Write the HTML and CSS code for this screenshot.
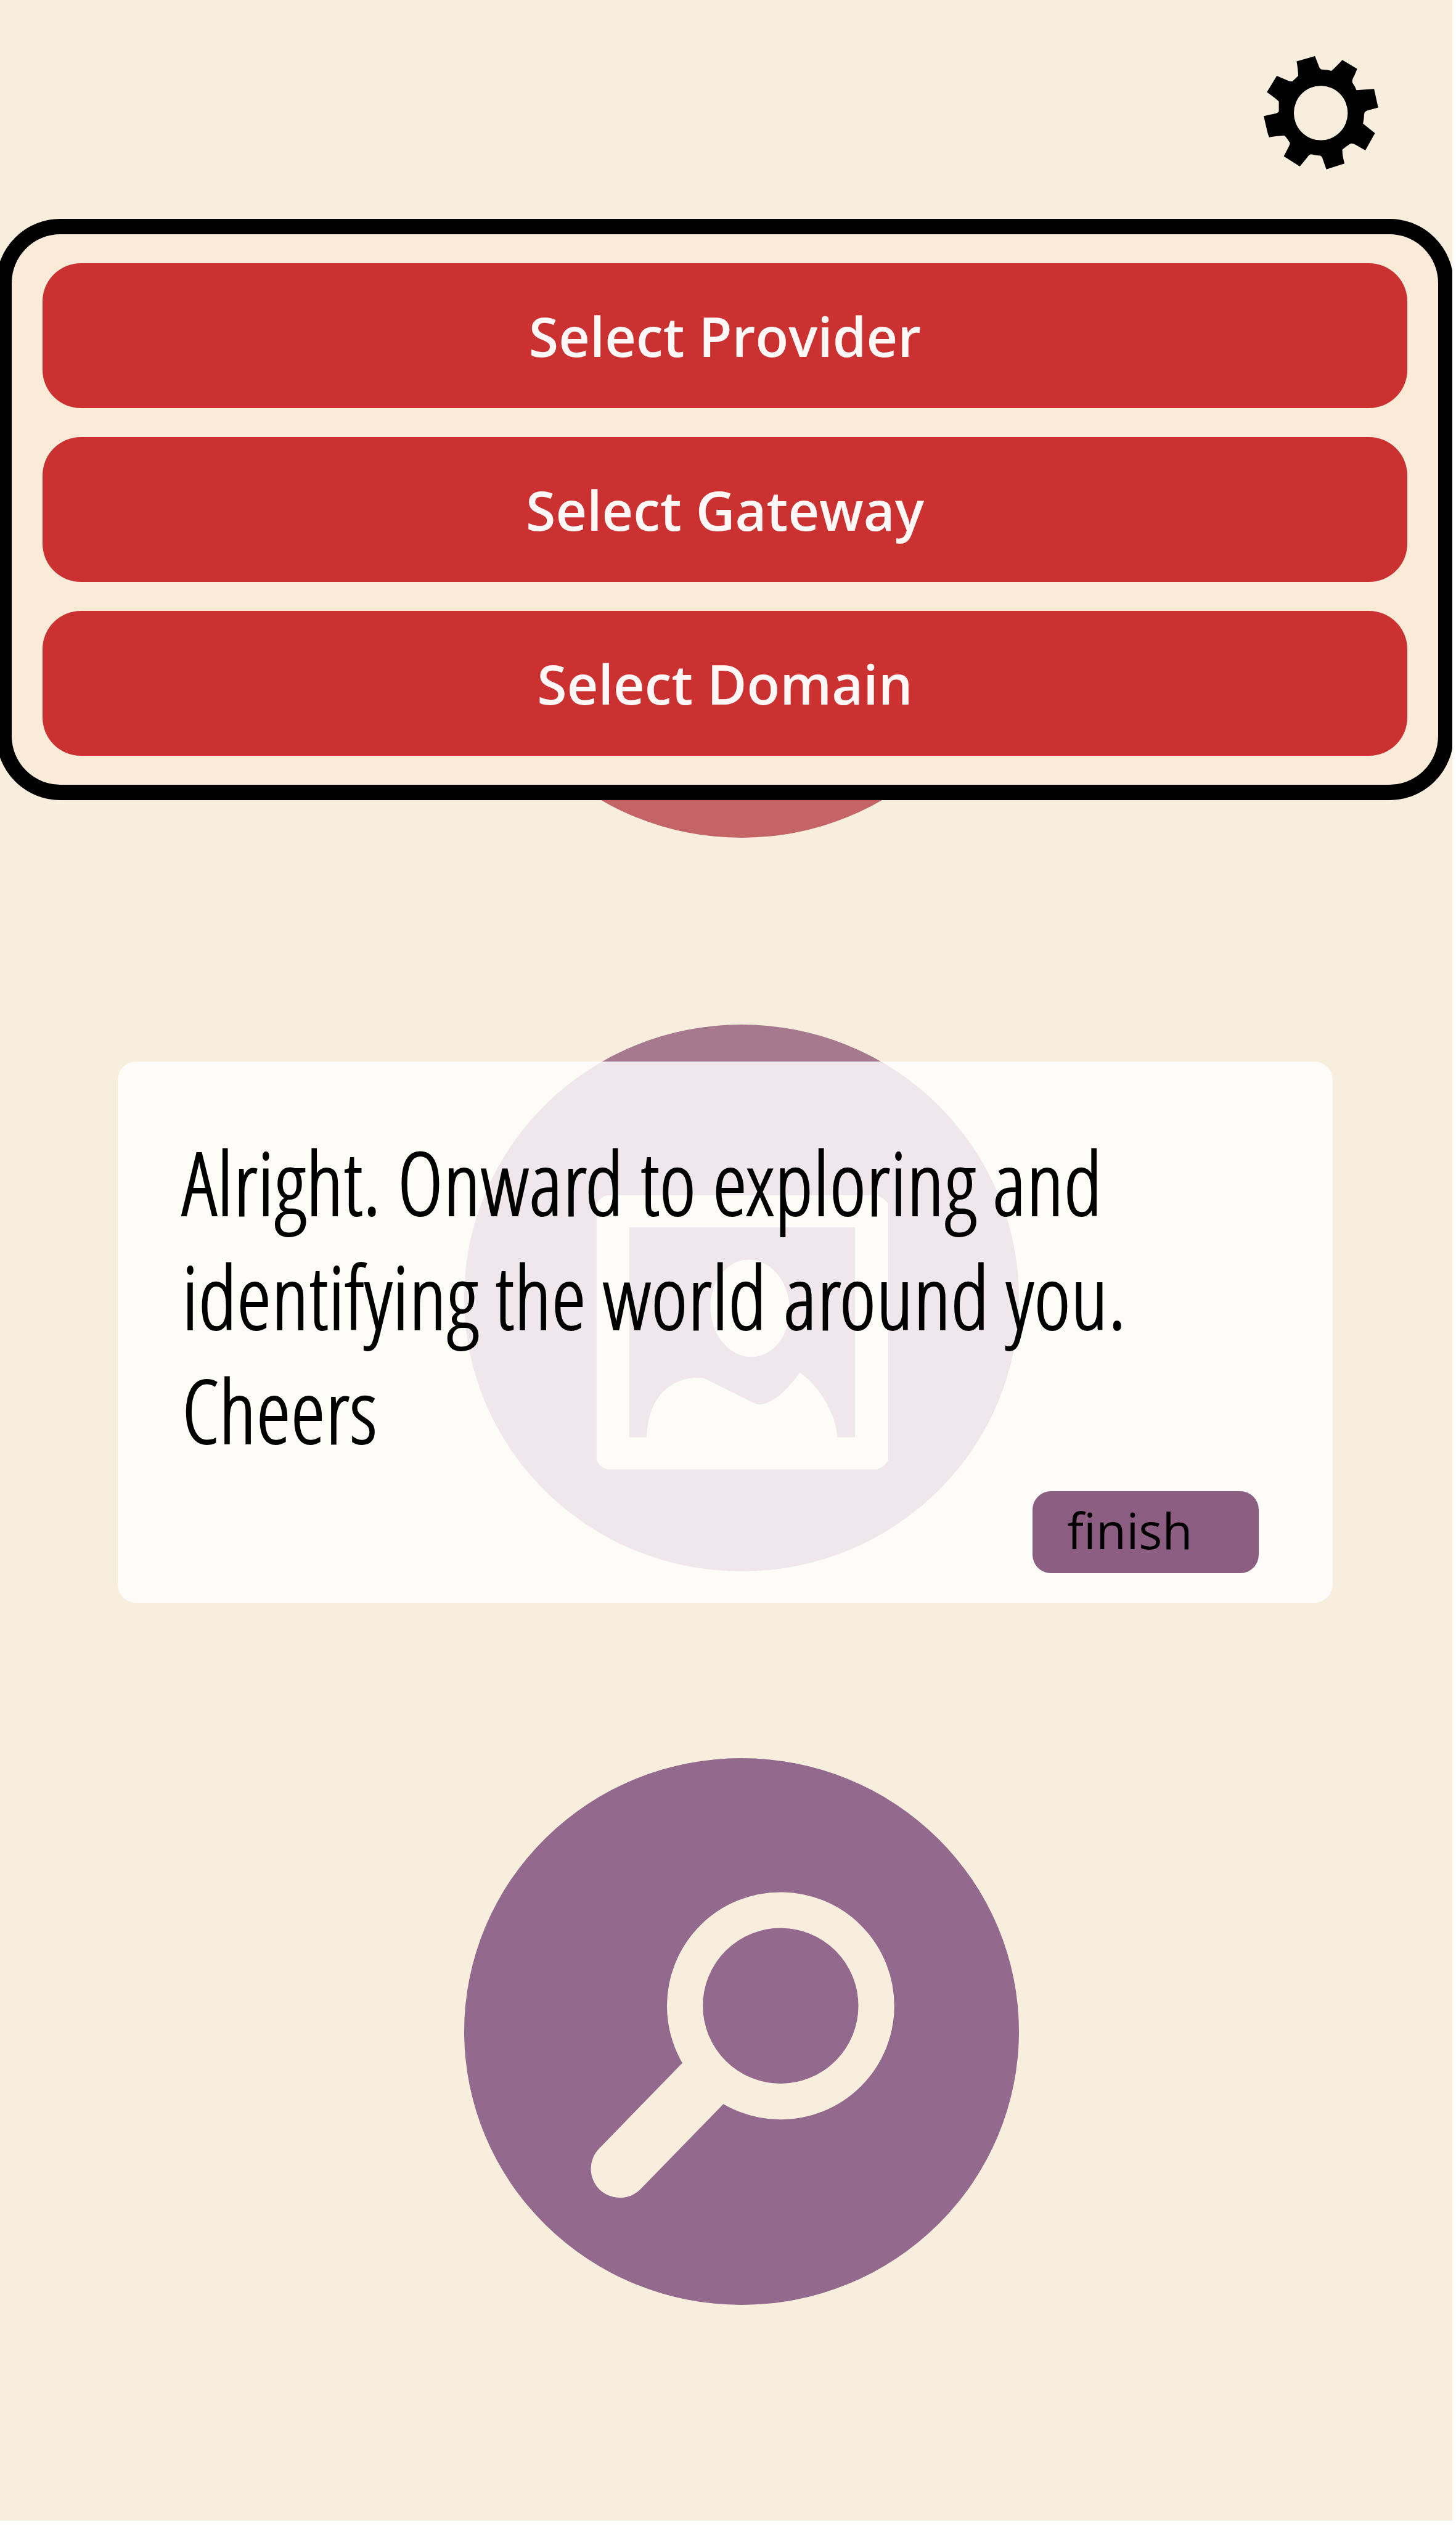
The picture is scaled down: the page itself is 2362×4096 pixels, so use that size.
FILE: index.html
```html
<!DOCTYPE html>
<html lang="en">
<head>
<meta charset="utf-8">
<meta name="viewport" content="width=device-width, initial-scale=1">
<title>Explore</title>
<link rel="stylesheet" href="styles.css">
</head>
<body>
<div class="screen">
  <header class="topbar">
    <button class="settings" type="button" aria-label="Settings" aria-expanded="true">
      <svg class="settings-icon" viewBox="248 172 787 783" aria-hidden="true">
        <path fill-rule="evenodd" d="M474 212L600 176L622 232Q630 262 645 268Q685 268 712 278Q730 265 788 203L890 264L870 312Q850 345 858 360Q875 382 885 410L1006 402L1034 530L968 548Q938 554 937 578Q938 605 930 640L1012 705L946 824L880 786Q852 768 836 782Q810 798 788 818Q786 850 803 914L678 954L656 890Q650 865 636 860Q600 858 575 850Q560 852 550 868L496 934L386 864L414 810Q430 780 428 772Q412 745 392 722Q350 722 285 734L274 700L248 588L322 572Q345 568 352 556L352 488Q335 470 270 424L338 312L400 338Q430 352 445 350L485 312Q484 270 474 212ZM825 567A185 187 0 1 0 455 567A185 187 0 1 0 825 567Z"/>
      </svg>
    </button>
  </header>

  <nav class="menu" aria-label="Settings">
    <button class="menu-item" type="button">Select Provider</button>
    <button class="menu-item" type="button">Select Gateway</button>
    <button class="menu-item" type="button">Select Domain</button>
  </nav>

  <main class="actions">
    <button class="action action-camera" type="button" aria-label="Camera"></button>
    <button class="action action-picture" type="button" aria-label="Picture">
      <svg class="action-icon" viewBox="0 0 900 887" aria-hidden="true">
        <g transform="translate(173 221) scale(.3545)">
          <path fill-rule="evenodd" d="M170 157H1400Q1425 165 1452 195V1370Q1435 1402 1400 1412H165Q130 1398 118 1370V200Q130 165 170 157ZM267 305V1265H1300V305Z"/>
          <ellipse cx="820" cy="675" rx="181" ry="223" transform="rotate(-4 820 675)"/>
          <path d="M347 1270C350 1090 450 990 590 992Q605 991 620 1000L835 1107Q865 1122 895 1108C960 1085 1010 1020 1048 968C1140 1035 1215 1160 1220 1270Z"/>
        </g>
      </svg>
    </button>
    <button class="action action-search" type="button" aria-label="Search">
      <svg class="action-icon" viewBox="0 0 900 887" aria-hidden="true">
        <g class="lens" transform="translate(-24 -24) scale(.6065)">
          <circle cx="886" cy="702" r="256" stroke-width="96"/>
          <path d="M456 1138L676 912" stroke-width="155"/>
        </g>
      </svg>
    </button>
  </main>

  <section class="tip" role="dialog" aria-labelledby="tip-text">
    <p class="tip-text" id="tip-text">Alright. Onward to exploring and<br>identifying the world around you.<br>Cheers</p>
    <button class="finish" type="button">finish</button>
  </section>
</div>
</body>
</html>
```

FILE: styles.css
```css
* { box-sizing: border-box; }

body {
  margin: 0;
  padding: 0 6px 6px 0;
  background: #fff;
  font-family: "Open Sans", "Noto Sans", sans-serif;
}

button {
  margin: 0;
  border: 0;
  font: inherit;
  cursor: pointer;
}

.screen {
  position: relative;
  overflow: hidden;
  background: #f8eede;
}

.topbar {
  display: flex;
  justify-content: flex-end;
  padding: 90px 120px 0;
}

.settings {
  display: flex;
  padding: 0;
  background: none;
}

.settings-icon {
  display: block;
  width: 186px;
  height: 185px;
}

/* Dropdown that opens under the gear, over the action buttons */
.menu {
  position: absolute;
  z-index: 1;
  top: 355px;
  left: -6px;
  right: -2px;
  display: flex;
  flex-direction: column;
  gap: 47px;
  padding: 47px 50px;
  border: 25px solid #000;
  border-radius: 104px;
  background: #faead8;
}

.menu-item {
  height: 235px;
  padding: 0;
  border-radius: 62px;
  background: #cb3131;
  color: #fff8f6;
  font-size: 88px;
  font-weight: 600;
}

.actions {
  display: flex;
  flex-direction: column;
  align-items: center;
  gap: 303px;
  padding: 197px 0 350px 50px;
}

.action {
  width: 900px;
  height: 887px;
  padding: 0;
  border-radius: 50%;
}

.action-camera { background: #c46466; }
.action-picture { background: #a6798f; }
.action-search { background: #93698d; }

.action-icon {
  display: block;
  fill: #f8eede;
}

.lens {
  fill: none;
  stroke: #f8eede;
  stroke-linecap: round;
}

/* Tip card, laid over the action buttons */
.tip {
  position: absolute;
  top: 1722px;
  left: 191px;
  right: 194px;
  display: flex;
  flex-direction: column;
  gap: 40px;
  padding: 102px 120px 48px 104px;
  border-radius: 30px;
  background: rgba(255, 255, 255, .82);
}

.tip-text {
  margin: 0;
  color: #000;
  font-family: "Open Sans Condensed Light", "Roboto Condensed", "Liberation Sans Narrow", "Open Sans", sans-serif;
  font-size: 143px;
  line-height: 185px;
  -webkit-text-stroke: 2px #000;
}

.finish {
  align-self: flex-end;
  width: 367px;
  height: 133px;
  padding: 0 56px 8px;
  border-radius: 30px;
  background: #8c5f82;
  color: #000;
  font-size: 80px;
  line-height: 112px;
  text-align: left;
}
```
